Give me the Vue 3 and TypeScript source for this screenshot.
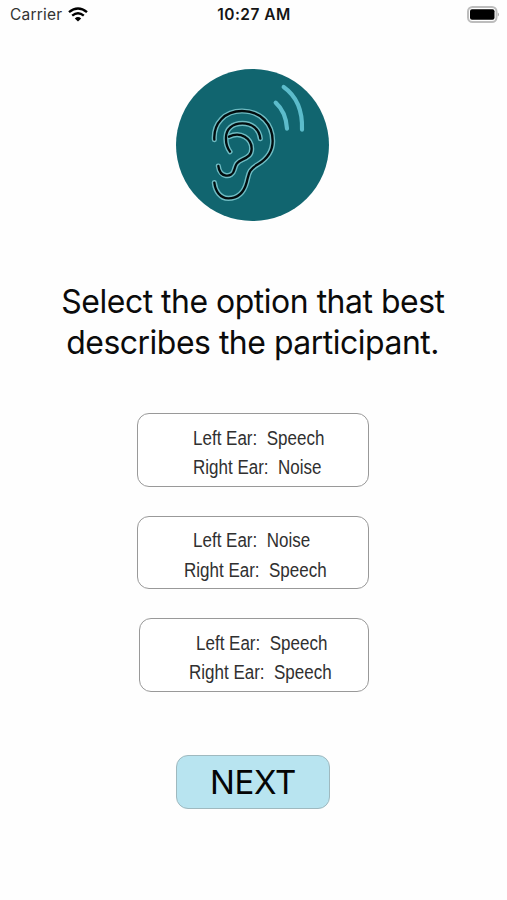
<script setup lang="ts">
import { ref } from 'vue'

interface EarOption {
  id: string
  left: string
  right: string
}

const options: EarOption[] = [
  { id: 'speech-noise', left: 'Speech', right: 'Noise' },
  { id: 'noise-speech', left: 'Noise', right: 'Speech' },
  { id: 'speech-speech', left: 'Speech', right: 'Speech' },
]

const selected = ref<string | null>(null)
</script>

<template>
  <div class="screen">
    <header class="status">
      <div class="carrier">
        <span class="carrier-name">Carrier</span>
        <svg class="wifi" viewBox="0 0 20 15" fill="none" stroke="#000" stroke-width="2.4">
          <path d="M1 5.2Q10-2.4 19 5.2" />
          <path d="M4.2 8.7Q10 3.9 15.8 8.7" />
          <path d="M6.8 11.4Q10 8.8 13.2 11.4L10 14.6Z" fill="#000" stroke="none" />
        </svg>
      </div>
      <span class="time">10:27 AM</span>
      <svg class="battery" viewBox="0 0 32 17">
        <rect x="1" y="1" width="28.500" height="15" rx="4.5" fill="#fff" stroke="#bdbdbd" stroke-width="2" />
        <rect x="3" y="3.2" width="24.500" height="10.6" rx="2" fill="#000" />
        <path d="M30.8 6.5Q32 7 32 8.5T30.8 10.5Z" fill="#aaa" />
      </svg>
    </header>

    <svg class="logo" viewBox="20 27 459 456" fill="none" stroke-linecap="round" stroke-linejoin="round">
      <ellipse cx="249.500" cy="255" rx="229.500" ry="228" fill="#11656f" />
      <defs>
        <g id="ear-lines">
          <path d="M135 239C132 190 166 153 218 153C276 153 310 194 310 243C310 275 294 296 266 313C237 330 239 340 232 367C223 400 202 415 177 415C153 415 138 394 135 368" />
          <path d="M273 236C270 207 248 190 219 190C188 190 171 208 170 231C169 248 174 264 182 275" />
          <path d="M179 230C214 213 247 236 247 266C247 285 235 292 219 299C200 307 199 316 195 329C188 356 151 353 147 318" />
        </g>
      </defs>
      <use href="#ear-lines" stroke="#6fbcc3" stroke-width="15.500" />
      <use href="#ear-lines" stroke="#020c0e" stroke-width="7" />
      <path d="M343 81C381 108 400 151 398 209M319 128C340 147 351 173 353 206" stroke="#5cbccb" stroke-width="12.500" />
    </svg>

    <h1 class="title">
      <span class="line">Select the option that best</span>
      <span class="line">describes the participant.</span>
    </h1>

    <div class="options">
      <button
        v-for="option in options"
        :key="option.id"
        type="button"
        class="option"
        :class="option.id"
        :aria-pressed="selected === option.id"
        @click="selected = option.id"
      >
        <span class="ear left">Left Ear:&nbsp; {{ option.left }}</span>
        <span class="ear right">Right Ear:&nbsp; {{ option.right }}</span>
      </button>
    </div>

    <button type="button" class="next">NEXT</button>
  </div>
</template>

<style>
body {
  background: #fefefe;
}
</style>

<style scoped>
.screen {
  display: flex;
  flex-direction: column;
  align-items: center;
  width: 507px;
  height: 900px;
  overflow: hidden;
  background: #fefefe;
  color: #0b0b0b;
  font-family: Inter, sans-serif;
}

.status {
  display: grid;
  grid-template-columns: 1fr auto 1fr;
  align-items: center;
  box-sizing: border-box;
  width: 100%;
  height: 29px;
  padding: 0 8px 0 10px;
  font-size: 15.5px;
}

.carrier {
  display: flex;
  align-items: center;
  gap: 6px;
}

.carrier-name {
  width: 52px;
  color: #333;
  letter-spacing: 0.2px;
}

.wifi {
  width: 20px;
  height: 15px;
}

.time {
  padding-right: 1px;
  font-weight: 600;
  letter-spacing: 0.45px;
  color: #151515;
}

.battery {
  justify-self: end;
  width: 32px;
  height: 17px;
}

.logo {
  flex: none;
  width: 153px;
  height: 152px;
  margin: 40px 2px 0 0;
}

.title {
  display: flex;
  flex-direction: column;
  align-items: center;
  margin: 60px 1px 0 0;
  font-size: 33px;
  font-weight: 400;
  line-height: 41px;
  letter-spacing: -0.5px;
  white-space: nowrap;
}

.line {
  transform: scaleX(0.968);
}

.options {
  display: flex;
  flex-direction: column;
  align-items: center;
  gap: 29px;
  margin: 50px 1px 0 0;
}

.option {
  display: flex;
  flex-direction: column;
  align-items: flex-start;
  box-sizing: border-box;
  width: 232px;
  height: 73.5px;
  padding: 9.5px 0 0 54.5px;
  border: 1px solid #999;
  border-radius: 12px;
  background: #fff;
  color: #303030;
  font: 20px/29.500px "Liberation Sans", Arial, sans-serif;
}

.ear {
  white-space: nowrap;
  transform: scaleX(0.85);
  transform-origin: left center;
}

.noise-speech .right {
  margin-left: -9px;
}

.speech-speech {
  width: 230px;
  margin-left: 1px;
}

.speech-speech .left {
  margin-left: 2px;
}

.speech-speech .right {
  margin-left: -5.5px;
}

.next {
  box-sizing: border-box;
  width: 154px;
  height: 54px;
  margin: 63.5px 1px 0 0;
  padding: 0;
  border: 1px solid #9fb9bf;
  border-radius: 12px;
  background: #b8e4f0;
  color: #050505;
  font: 400 33px/52px Inter, sans-serif;
  letter-spacing: -0.3px;
}
</style>
